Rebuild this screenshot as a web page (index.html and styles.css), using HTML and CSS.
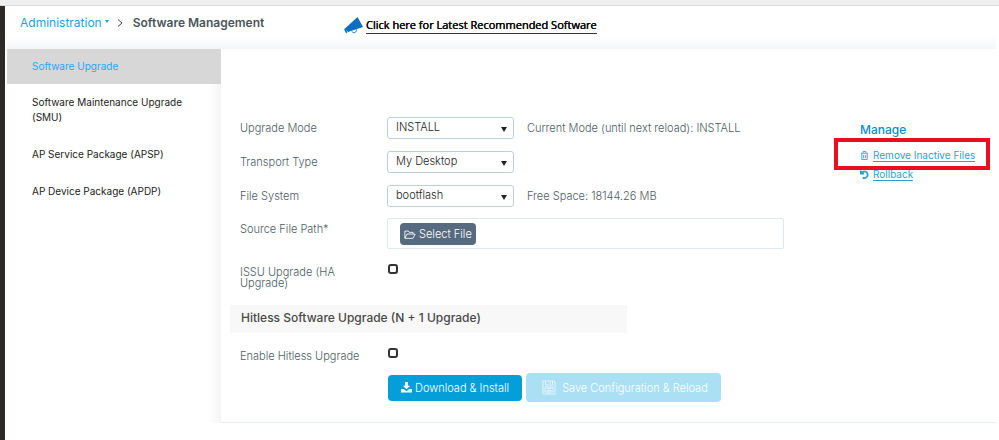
FILE: index.html
```
<!DOCTYPE html>
<html lang="en">
<head>
	<meta charset="utf-8">
	<title>Software Management</title>
	<link rel="stylesheet" href="styles.css">
</head>
<body>
	<div class="topbar"></div>
	<div class="shell">
		<div class="page">
			<header class="header">
				<nav class="breadcrumb">
					<a href="#">Administration</a>
					<span class="caret"></span>
					<svg class="chevron" viewBox="0 0 6 8"><path d="M1 .5l4 3.500-4 3.500"/></svg>
					<h1>Software Management</h1>
				</nav>
				<div class="notice">
					<svg class="horn" viewBox="0 0 20 17">
						<path d="M1 11.500L13.500 0l5.500 10L4 15z"/>
						<path d="M0 12l1.500-.8 2 4.300-1.500.7z"/>
						<path class="handle" d="M8 14.500c1 2 4.500 1.500 4.500-2"/>
					</svg>
					<a href="#">Click here for Latest Recommended Software</a>
				</div>
			</header>
			<div class="main">
				<nav class="sidebar">
					<a class="active" href="#">Software Upgrade</a>
					<a href="#">Software Maintenance Upgrade (SMU)</a>
					<a href="#">AP Service Package (APSP)</a>
					<a href="#">AP Device Package (APDP)</a>
				</nav>
				<div class="content">
					<form class="form">
						<div class="row">
							<label for="mode">Upgrade Mode</label>
							<div class="select">
								<select id="mode"><option>INSTALL</option></select>
							</div>
							<span>Current Mode (until next reload): INSTALL</span>
						</div>
						<div class="row">
							<label for="transport">Transport Type</label>
							<div class="select">
								<select id="transport"><option>My Desktop</option></select>
							</div>
						</div>
						<div class="row">
							<label for="fs">File System</label>
							<div class="select">
								<select id="fs"><option>bootflash</option></select>
							</div>
							<span>Free Space: 18144.26 MB</span>
						</div>
						<div class="row top">
							<label for="file">Source File Path*</label>
							<div class="filebox">
								<button type="button" id="file" class="btn-file">
									<svg viewBox="0 0 14 12"><path d="M1 10V2h4l1 1.500h4.500V5.500M1 10.500l2.500-5H13l-2.500 5z"/></svg>
									Select File
								</button>
							</div>
						</div>
						<div class="row check">
							<label for="issu">ISSU Upgrade (HA Upgrade)</label>
							<input type="checkbox" id="issu">
						</div>
						<h2>Hitless Software Upgrade (N + 1 Upgrade)</h2>
						<div class="row check">
							<label for="hitless">Enable Hitless Upgrade</label>
							<input type="checkbox" id="hitless">
						</div>
						<div class="actions">
							<button type="button" class="btn-install">
								<svg viewBox="0 0 12 12"><path d="M4.500 0h3v4H10L6 8 2 4h2.500zM0 7.500h3l3 2.500 3-2.500h3V11.500H0z"/></svg>
								Download &amp; Install
							</button>
							<button type="button" class="btn-reload" disabled>
								<svg viewBox="0 0 14 15"><path d="M1 1h11l1 1v12H1zM3.500 1v4h7V1M8 2v2M3 7h8v5H3zM4.500 8.500h5M4.500 10.500h5"/></svg>
								Save Configuration &amp; Reload
							</button>
						</div>
					</form>
					<aside class="manage">
						<h3>Manage</h3>
						<div class="highlight">
							<a href="#">
								<svg viewBox="0 0 10 10"><path d="M1 2.500h8M3.500 2V.500h3V2M2 3v6.500h6V3M4 4.500V8M6 4.500V8"/></svg>
								<span>Remove Inactive Files</span>
							</a>
						</div>
						<a href="#">
							<svg class="undo" viewBox="0 0 10 10"><path d="M1 .5V4h3.500M1.500 3.500A3.700 3.700 0 1 1 3 8.500"/></svg>
							<span>Rollback</span>
						</a>
					</aside>
				</div>
			</div>
		</div>
	</div>
</body>
</html>
```
FILE: styles.css
```
*{
	box-sizing: border-box;
}
body{
	margin: 0;
	min-height: 100vh;
	display: flex;
	flex-direction: column;
	font: 300 11px/14px Inter, "Liberation Sans", sans-serif;
	color: #4c5d66;
	background: #fff;
}
h1, h2, h3{
	margin: 0;
}
svg{
	flex: none;
	fill: none;
	stroke: currentColor;
}
.topbar{
	height: 6px;
	background: #efefef;
	border-bottom: 1px solid #dcdcdc;
}
.shell{
	flex: 1;
	display: flex;
	border-left: 5px solid #2b2a29;
	padding: 0 3px 0 2px;
}
.page{
	flex: 1;
	min-width: 0;
}

/* header */
.header{
	display: flex;
	height: 43px;
	padding: 4px 0 0 13px;
	background: linear-gradient(#fff 70%, #f3f6f8);
}
.breadcrumb{
	display: flex;
	align-items: center;
	width: 324px;
	height: 26px;
	font-size: 12px;
	font-weight: 400;
}
.breadcrumb a{
	color: #1d9fe0;
	text-decoration: none;
}
.caret{
	margin: 0 8px 4px 3px;
	border: 2px solid transparent;
	border-top: 3px solid #1d9fe0;
	border-bottom: 0;
}
.chevron{
	width: 6px;
	height: 8px;
	margin-right: 10px;
	color: #444;
}
.breadcrumb h1{
	font-size: 12px;
	font-weight: 600;
	color: #4a555b;
	white-space: nowrap;
}
.notice{
	display: flex;
	align-items: center;
	height: 30px;
}
.horn{
	width: 20px;
	height: 17px;
	margin-right: 2px;
	fill: #0a6fc0;
	stroke: none;
}
.horn .handle{
	fill: none;
	stroke: #0a6fc0;
}
.notice a{
	font: 400 11px/16px "Open Sans", sans-serif;
	color: #111;
	text-shadow: 0 0 #111, 0 0 #111;
	text-decoration: none;
	border-bottom: 1px solid #333;
}

/* left menu */
.main{
	display: flex;
}
.sidebar{
	flex: 0 0 214px;
	background: linear-gradient(to left, #f5f5f5, #fff 12px);
}
.sidebar a{
	display: block;
	padding: 11px 34px 11px 25px;
	font-size: 10px;
	line-height: 15px;
	font-weight: 400;
	color: #222;
	text-decoration: none;
}
.sidebar .active{
	padding: 10px 25px;
	color: #1eaaf1;
	background: #d7d7d7;
}

/* form */
.content{
	flex: 1;
	display: flex;
	justify-content: space-between;
	padding: 62px 0 20px 9px;
	border-bottom: 1px solid #e8eff3;
}
.form{
	flex: 0 1 554px;
}
.row{
	display: flex;
	align-items: center;
	min-height: 34px;
	padding-left: 10px;
}
.row label{
	flex: 0 0 147px;
	padding-right: 25px;
}
.select{
	position: relative;
	width: 127px;
	margin-right: 13px;
}
.select select{
	display: block;
	width: 100%;
	height: 22px;
	padding: 0 8px 2px;
	appearance: none;
	font: inherit;
	color: #222;
	background: #fff;
	border: 1px solid #b9cfdc;
	border-radius: 3px;
}
.select::after{
	content: "";
	position: absolute;
	right: 7px;
	top: 10px;
	border: 3px solid transparent;
	border-top: 5px solid #222;
	border-bottom: 0;
	pointer-events: none;
}
.top{
	align-items: flex-start;
}
.top label{
	padding-top: 9px;
}
.filebox{
	flex: 1;
	height: 31px;
	margin: 5px 0;
	padding: 4px 12px;
	border: 1px solid #e1e8ed;
	border-radius: 2px;
}
.check{
	align-items: flex-start;
	height: 51px;
	padding-top: 10px;
}
.check label{
	padding-top: 3px;
	line-height: 11px;
}
.check input{
	appearance: none;
	width: 10px;
	height: 10px;
	margin: 0 1px;
	border: 2px solid #333;
	border-radius: 3px;
}
.form h2{
	width: 397px;
	padding: 6px 11px 8px;
	font-size: 12px;
	font-weight: 500;
	color: #484848;
	background: #f8f8f8;
}
h2 + .check{
	height: 40px;
	padding-top: 15px;
}

/* buttons */
button{
	display: flex;
	align-items: center;
	font: inherit;
	color: #fff;
	border: 0;
	border-radius: 4px;
	white-space: nowrap;
}
.btn-file{
	gap: 3px;
	height: 22px;
	padding: 0 4px;
	background: #566b80;
}
.btn-file svg{
	width: 12px;
	height: 11px;
}
.actions{
	display: flex;
	align-items: center;
	gap: 4px;
	padding-left: 158px;
}
.btn-install{
	gap: 3px;
	height: 26px;
	padding: 0 13px;
	background: #049fd9;
}
.btn-install svg{
	width: 11px;
	height: 11px;
	fill: #fff;
	stroke: none;
}
.btn-reload{
	gap: 6px;
	height: 29px;
	padding: 0 13px 0 16px;
	background: #abdff3;
}
.btn-reload svg{
	width: 14px;
	height: 15px;
	opacity: .7;
}

/* manage links */
.manage{
	flex: 0 0 162px;
	padding: 11px 6px 0 0;
}
.manage h3{
	padding-left: 26px;
	font-size: 12px;
	font-weight: 500;
	line-height: 16px;
	color: #0d8ccb;
}
.manage a{
	display: flex;
	align-items: center;
	gap: 4px;
	padding-left: 26px;
	color: #2f9fd0;
	text-decoration: none;
}
.manage a span{
	font-size: 10px;
	font-weight: 400;
	line-height: 12px;
	border-bottom: 1px solid #2f9fd0;
}
.manage svg{
	width: 9px;
	height: 9px;
}
.manage .undo{
	stroke-width: 2;
}
.highlight{
	height: 32px;
	margin-bottom: -2px;
	padding-top: 7px;
	border: 4px solid #e8101c;
}
.highlight a{
	padding-left: 22px;
}
```
